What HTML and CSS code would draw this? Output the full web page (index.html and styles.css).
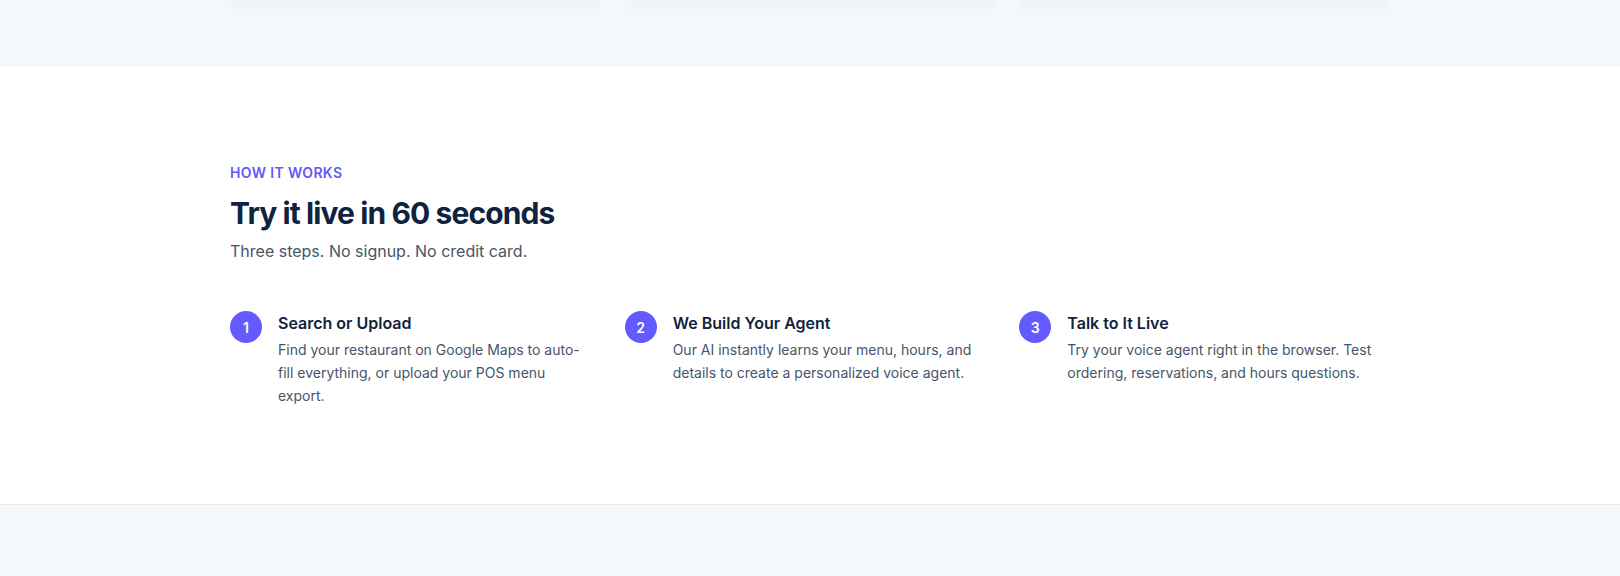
FILE: index.html
```html
<!DOCTYPE html>
<html lang="en">
<head>
<meta charset="utf-8">
<title>How it works</title>
<link rel="stylesheet" href="styles.css">
</head>
<body>
<section class="band band-top">
  <div class="container card-row">
    <div class="ghost-card"></div>
    <div class="ghost-card"></div>
    <div class="ghost-card"></div>
  </div>
</section>
<section class="how">
  <div class="container">
    <p class="eyebrow">HOW IT WORKS</p>
    <h2 class="title">Try it live in 60 seconds</h2>
    <p class="subtitle">Three steps. No signup. No credit card.</p>
    <div class="steps">
      <div class="step">
        <div class="num">1</div>
        <div class="step-body">
          <h3 class="step-title">Search or Upload</h3>
          <p class="step-text">Find your restaurant on Google Maps to auto-fill everything, or upload your POS menu export.</p>
        </div>
      </div>
      <div class="step">
        <div class="num">2</div>
        <div class="step-body">
          <h3 class="step-title">We Build Your Agent</h3>
          <p class="step-text">Our AI instantly learns your menu, hours, and details to create a personalized voice agent.</p>
        </div>
      </div>
      <div class="step">
        <div class="num">3</div>
        <div class="step-body">
          <h3 class="step-title">Talk to It Live</h3>
          <p class="step-text">Try your voice agent right in the browser. Test ordering, reservations, and hours questions.</p>
        </div>
      </div>
    </div>
  </div>
</section>
<section class="band band-bottom"></section>
</body>
</html>
```
FILE: styles.css
```css
* { box-sizing: border-box; }
html, body { margin: 0; padding: 0; }
body {
  font-family: Inter, "Noto Sans", "Liberation Sans", sans-serif;
  background: #ffffff;
  color: #0f233e;
  -webkit-font-smoothing: antialiased;
}
.container {
  width: 1160px;
  margin: 0 auto;
}
.band {
  background: #f5f8fb;
}
.band-top {
  height: 67px;
  overflow: hidden;
}
.card-row {
  display: grid;
  grid-template-columns: repeat(3, 1fr);
  gap: 24px;
}
.ghost-card {
  height: 13px;
  background: #f2f5f8;
  border-radius: 0 0 18px 18px;
  box-shadow: 0 2px 6px rgba(15, 35, 62, 0.02);
}
.how {
  padding: 96px 0 97px;
  background: #ffffff;
}
.eyebrow {
  margin: 0;
  font-size: 14px;
  line-height: 20px;
  font-weight: 600;
  letter-spacing: 0.025em;
  color: #6359f8;
}
.title {
  margin: 12px 0 0;
  font-size: 30px;
  line-height: 36px;
  font-weight: 700;
  letter-spacing: -0.03em;
  color: #0f233e;
}
.subtitle {
  margin: 8px 0 0;
  font-size: 16px;
  line-height: 24px;
  color: #475569;
}
.steps {
  margin-top: 47px;
  display: grid;
  grid-template-columns: repeat(3, 1fr);
  gap: 24px;
}
.step {
  display: flex;
  align-items: flex-start;
  gap: 16px;
}
.num {
  flex: none;
  width: 32px;
  height: 32px;
  margin-top: 1px;
  border-radius: 50%;
  background: #635bff;
  color: #ffffff;
  font-size: 14px;
  font-weight: 600;
  display: flex;
  align-items: center;
  justify-content: center;
}
.step-body {
  flex: 1;
  padding-right: 8px;
}
.step-title {
  margin: 1px 0 0;
  font-size: 16px;
  line-height: 24px;
  font-weight: 600;
  color: #0f233e;
}
.step-text {
  margin: 4px 0 0;
  font-size: 14px;
  line-height: 22.75px;
  color: #475569;
}
.band-bottom {
  border-top: 1px solid #e6ebf1;
  height: 72px;
}
```
